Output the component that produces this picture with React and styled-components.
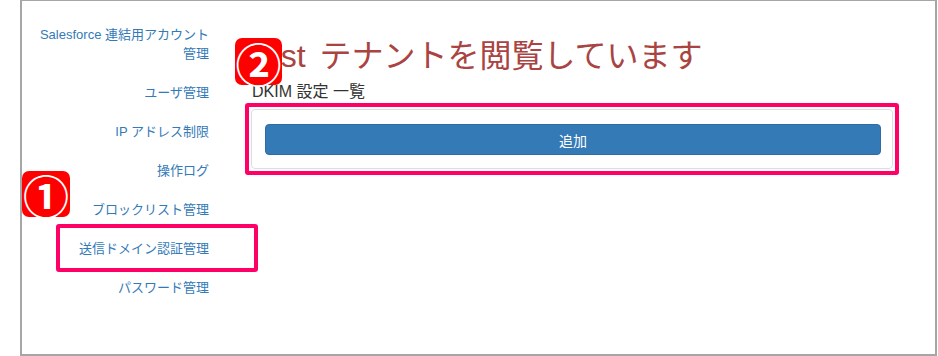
import styled, { createGlobalStyle } from "styled-components";

const GlobalStyle = createGlobalStyle`
  html, body {
    margin: 0;
    padding: 0;
    background: #fff;
    font-family: "Liberation Sans", "Noto Sans CJK JP", sans-serif;
  }
`;

const Frame = styled.div`
  position: relative;
  box-sizing: border-box;
  margin: -1px 0 0 20px;
  width: 917px;
  height: 357px;
  border: 2px solid #a6a6a6;
  display: flex;
  background: #fff;
`;

const Sidebar = styled.ul`
  list-style: none;
  margin: 0;
  padding: 14px 15px 0 0;
  width: 202px;
  box-sizing: border-box;
  flex-shrink: 0;
`;

const NavItem = styled.li`
  position: relative;
  padding: 10px 0;
  text-align: right;
  font-size: 13px;
  line-height: 19px;
  color: #337ab7;
`;

const Highlight = styled.div`
  position: absolute;
  border: 4px solid #ff0066;
  border-radius: 3px;
  pointer-events: none;
`;

const NavHighlight = styled(Highlight)`
  left: 34px;
  right: -49px;
  top: -5px;
  bottom: -4px;
`;

const PanelHighlight = styled(Highlight)`
  left: -7px;
  right: -7px;
  top: -7px;
  bottom: -7px;
`;

const Main = styled.div`
  flex: 1;
  padding: 37px 42px 0 27px;
`;

const Title = styled.h1`
  margin: 0 0 0 -4px;
  font-size: 32px;
  line-height: 36px;
  font-weight: normal;
  word-spacing: 5px;
  color: #a94442;
  white-space: nowrap;
`;

const Subtitle = styled.div`
  margin-top: 8px;
  padding-left: 1px;
  font-size: 16px;
  line-height: 20px;
  color: #333;
`;

const Panel = styled.div`
  position: relative;
  margin-top: 7px;
  border: 1px solid #ddd;
  border-radius: 4px;
  padding: 14px 11px 13px 13px;
`;

const AddButton = styled.button`
  display: block;
  width: 100%;
  height: 31px;
  border: 1px solid #2e6da4;
  border-radius: 4px;
  background: #337ab7;
  color: #fff;
  font-family: "Liberation Sans", "Noto Sans CJK JP", sans-serif;
  font-size: 14px;
`;

const Badge = styled.div`
  position: absolute;
  left: ${(p) => p.x}px;
  top: ${(p) => p.y}px;
  width: ${(p) => p.w}px;
  height: ${(p) => p.h}px;
  border-radius: 7px;
  background: #ff0000;
  color: #fff;
  display: flex;
  align-items: center;
  justify-content: center;
  font-family: "Noto Sans CJK JP", sans-serif;
  font-size: 46px;
  font-weight: bold;
  line-height: 1;
`;

const navItems = [
  "Salesforce 連結用アカウント管理",
  "ユーザ管理",
  "IP アドレス制限",
  "操作ログ",
  "ブロックリスト管理",
  "送信ドメイン認証管理",
  "パスワード管理",
];

export default function App() {
  return (
    <>
      <GlobalStyle />
      <Frame>
        <Sidebar>
          {navItems.map((label, i) => (
            <NavItem key={label}>
              {i === 0 ? (
                <>
                  Salesforce 連結用アカウント
                  <br />
                  管理
                </>
              ) : (
                label
              )}
              {label === "送信ドメイン認証管理" && <NavHighlight />}
            </NavItem>
          ))}
        </Sidebar>
        <Main>
          <Title>Test テナントを閲覧しています</Title>
          <Subtitle>DKIM 設定 一覧</Subtitle>
          <Panel>
            <AddButton>追加</AddButton>
            <PanelHighlight />
          </Panel>
        </Main>
        <Badge x={0} y={170} w={48} h={46}>①</Badge>
        <Badge x={213} y={37} w={47} h={47}>②</Badge>
      </Frame>
    </>
  );
}
